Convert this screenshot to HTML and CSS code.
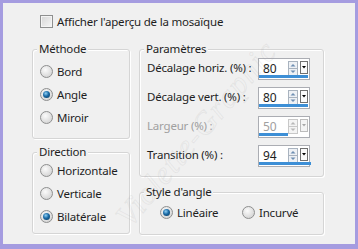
FILE: index.html
```html
<!DOCTYPE html>
<html lang="fr">
<head>
    <meta charset="UTF-8">
    <meta name="viewport" content="width=device-width, initial-scale=1.0">
    <title>Mosaïque</title>
    <link rel="stylesheet" href="styles.css">
</head>
<body>
    <div class="dialog">
        <label class="check-row">
            <span class="checkbox"></span>
            <span>Afficher l'aperçu de la mosaïque</span>
        </label>

        <div class="panels">
            <div class="column">
                <div class="group method">
                    <div class="legend">Méthode</div>
                    <div class="radio-list">
                        <div class="radio-item"><span class="radio"></span>Bord</div>
                        <div class="radio-item"><span class="radio checked"></span>Angle</div>
                        <div class="radio-item"><span class="radio"></span>Miroir</div>
                    </div>
                </div>
                <div class="group direction">
                    <div class="legend">Direction</div>
                    <div class="radio-list">
                        <div class="radio-item"><span class="radio"></span>Horizontale</div>
                        <div class="radio-item"><span class="radio"></span>Verticale</div>
                        <div class="radio-item"><span class="radio checked"></span>Bilatérale</div>
                    </div>
                </div>
            </div>

            <div class="column">
                <div class="group params">
                    <div class="legend">Paramètres</div>
                    <div class="param-rows">
                        <div class="param-row">
                            <span class="param-label">Décalage horiz. (%) :</span>
                            <div class="spin">
                                <span class="spin-value">80</span>
                                <svg class="arrows" width="10" height="15" viewBox="0 0 10 15"><rect x="0.5" y="0.5" width="9" height="14" fill="#eef1f5" stroke="#a9b3bf"/><line x1="1" y1="7.5" x2="9" y2="7.5" stroke="#a9b3bf"/><path d="M2.5 5.5 L5 3 L7.5 5.5 Z" fill="#6f8fb3"/><path d="M2.5 9.5 L7.5 9.5 L5 12 Z" fill="#6f8fb3"/></svg>
                                <svg class="drop" width="8" height="13" viewBox="0 0 8 13"><rect x="0.5" y="0.5" width="7" height="12" fill="#fafafa" stroke="#707070"/><path d="M2 5 L6 5 L4 7.5 Z" fill="#000"/></svg>
                                <span class="bar" style="width: 49px"></span>
                            </div>
                        </div>
                        <div class="param-row">
                            <span class="param-label">Décalage vert. (%) :</span>
                            <div class="spin">
                                <span class="spin-value">80</span>
                                <svg class="arrows" width="10" height="15" viewBox="0 0 10 15"><rect x="0.5" y="0.5" width="9" height="14" fill="#eef1f5" stroke="#a9b3bf"/><line x1="1" y1="7.5" x2="9" y2="7.5" stroke="#a9b3bf"/><path d="M2.5 5.5 L5 3 L7.5 5.5 Z" fill="#6f8fb3"/><path d="M2.5 9.5 L7.5 9.5 L5 12 Z" fill="#6f8fb3"/></svg>
                                <svg class="drop" width="8" height="13" viewBox="0 0 8 13"><rect x="0.5" y="0.5" width="7" height="12" fill="#fafafa" stroke="#707070"/><path d="M2 5 L6 5 L4 7.5 Z" fill="#000"/></svg>
                                <span class="bar" style="width: 49px"></span>
                            </div>
                        </div>
                        <div class="param-row disabled">
                            <span class="param-label">Largeur (%) :</span>
                            <div class="spin">
                                <span class="spin-value">50</span>
                                <svg class="arrows" width="10" height="15" viewBox="0 0 10 15"><rect x="0.5" y="0.5" width="9" height="14" fill="#f4f4f4" stroke="#c8c8c8"/><line x1="1" y1="7.5" x2="9" y2="7.5" stroke="#c8c8c8"/><path d="M2.5 5.5 L5 3 L7.5 5.5 Z" fill="#b8b8b8"/><path d="M2.5 9.5 L7.5 9.5 L5 12 Z" fill="#b8b8b8"/></svg>
                                <svg class="drop" width="8" height="13" viewBox="0 0 8 13"><rect x="0.5" y="0.5" width="7" height="12" fill="#f4f4f4" stroke="#bcbcbc"/><path d="M2 5 L6 5 L4 7.5 Z" fill="#a8a8a8"/></svg>
                                <span class="bar" style="width: 29px"></span>
                            </div>
                        </div>
                        <div class="param-row">
                            <span class="param-label">Transition (%) :</span>
                            <div class="spin">
                                <span class="spin-value">94</span>
                                <svg class="arrows" width="10" height="15" viewBox="0 0 10 15"><rect x="0.5" y="0.5" width="9" height="14" fill="#eef1f5" stroke="#a9b3bf"/><line x1="1" y1="7.5" x2="9" y2="7.5" stroke="#a9b3bf"/><path d="M2.5 5.5 L5 3 L7.5 5.5 Z" fill="#6f8fb3"/><path d="M2.5 9.5 L7.5 9.5 L5 12 Z" fill="#6f8fb3"/></svg>
                                <svg class="drop" width="8" height="13" viewBox="0 0 8 13"><rect x="0.5" y="0.5" width="7" height="12" fill="#fafafa" stroke="#707070"/><path d="M2 5 L6 5 L4 7.5 Z" fill="#000"/></svg>
                                <span class="bar" style="width: 52px"></span>
                            </div>
                        </div>
                    </div>
                </div>
                <div class="group corner">
                    <div class="legend">Style d'angle</div>
                    <div class="radio-inline">
                        <div class="radio-item first"><span class="radio checked"></span>Linéaire</div>
                        <div class="radio-item"><span class="radio"></span>Incurvé</div>
                    </div>
                </div>
            </div>
        </div>

        <div class="watermark">Violette-Graphic</div>
    </div>
</body>
</html>
```

FILE: styles.css
```css
body {
    margin: 0;
    font-family: "Noto Sans", "Open Sans", sans-serif;
    font-size: 11.5px;
    letter-spacing: -0.2px;
    color: #1e1e1e;
}
.dialog {
    position: relative;
    overflow: hidden;
    width: 358px;
    height: 249px;
    box-sizing: border-box;
    border-style: solid;
    border-color: #a59ce0;
    border-width: 3px 3px 5px 3px;
    background: #f0f0f0;
    padding: 12px 0 0 29px;
}
.check-row {
    display: flex;
    align-items: center;
    gap: 4px;
    height: 13px;
    margin-left: 8px;
    line-height: 13px;
}
.checkbox {
    width: 11px;
    height: 11px;
    border: 1px solid #8e8f8f;
    background: linear-gradient(135deg, #d6d6d6, #f6f6f6);
    box-shadow: inset 0 0 0 1px #f4f4f4;
}
.panels {
    display: grid;
    grid-template-columns: 98px 185px;
    column-gap: 9px;
    margin-top: 21px;
}
.column {
    display: flex;
    flex-direction: column;
}
.group {
    box-sizing: border-box;
    border: 1px solid #d5d5d5;
    border-radius: 3px;
    box-shadow: inset 1px 1px 0 #fff, 1px 1px 0 #fff;
}
.legend {
    width: fit-content;
    margin: -9px 0 0 4px;
    padding: 0 2px;
    line-height: 16px;
    background: #f0f0f0;
}
.method {
    height: 90px;
}
.direction {
    height: 82px;
    margin-top: 13px;
}
.params {
    height: 128px;
}
.corner {
    height: 43px;
    margin-top: 15px;
}
.radio-list {
    padding-left: 7px;
}
.method .radio-list {
    padding-top: 3px;
}
.direction .radio-list {
    margin-top: -1px;
}
.radio-item {
    display: flex;
    align-items: center;
    gap: 4px;
    height: 23px;
}
.radio {
    width: 11px;
    height: 11px;
    border: 1px solid #8e8f8f;
    border-radius: 50%;
    background: radial-gradient(circle at 40% 35%, #fbfbfb, #d9d9d9 70%);
    display: flex;
    align-items: center;
    justify-content: center;
}
.radio.checked::after {
    content: "";
    width: 7px;
    height: 7px;
    border-radius: 50%;
    background: radial-gradient(circle at 40% 35%, #8fd0f4, #1a6aa6 45%, #0b3554);
}
.radio-inline {
    display: flex;
    padding-left: 20px;
    margin-top: 1px;
}
.radio-inline .first {
    width: 82px;
}
.param-rows {
    padding-left: 7px;
    margin-top: 1px;
}
.param-row {
    display: grid;
    grid-template-columns: 111px 52px;
    height: 29px;
}
.param-label {
    line-height: 20px;
    white-space: nowrap;
}
.disabled .param-label,
.disabled .spin-value {
    color: #a0a0a0;
}
.spin {
    position: relative;
    box-sizing: border-box;
    height: 22px;
    border: 1px solid #abadb3;
    background: #fff;
    display: flex;
    align-items: flex-start;
    padding: 2px 1px 0 4px;
}
.spin-value {
    flex: 1;
    line-height: 16px;
    font-size: 12px;
}
.arrows {
    margin-right: 2px;
}
.bar {
    position: absolute;
    left: 0;
    bottom: 1px;
    height: 3px;
    background: #3d8fd6;
}
.watermark {
    position: absolute;
    left: 78px;
    top: 112px;
    font-family: "Liberation Serif", serif;
    font-style: italic;
    font-size: 32px;
    letter-spacing: 1px;
    color: transparent;
    -webkit-text-stroke: 1px rgba(150, 150, 150, 0.13);
    transform: rotate(-50deg);
    pointer-events: none;
    white-space: nowrap;
}
```
